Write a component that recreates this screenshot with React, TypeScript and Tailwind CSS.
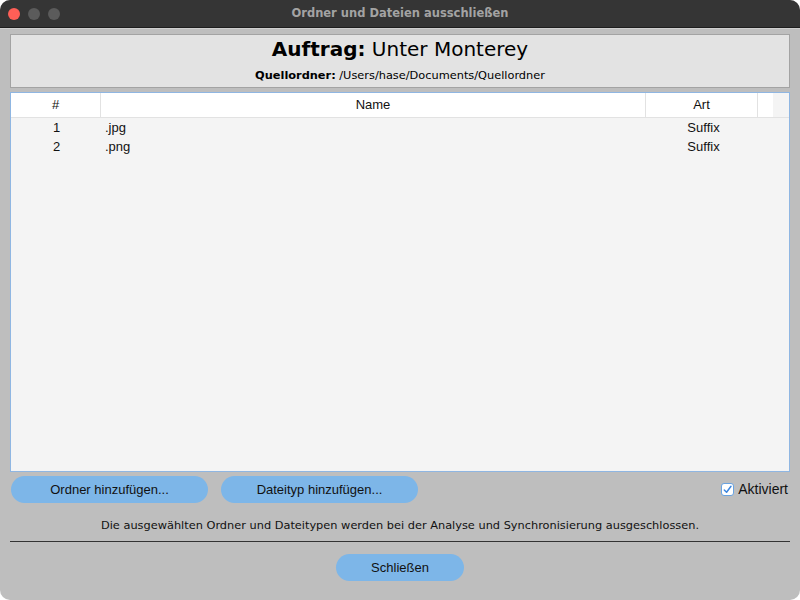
import React from "react";

const dv = { fontFamily: '"DejaVu Sans", sans-serif' };
const lib = { fontFamily: '"Liberation Sans", Arial, sans-serif' };

function Btn({ children, w }: { children: React.ReactNode; w: string }) {
  return (
    <button
      className={`h-[27px] ${w} rounded-full bg-[#7db6e8] text-[13px] text-[#111] flex items-center justify-center`}
      style={lib}
    >
      {children}
    </button>
  );
}

export default function App() {
  const rows = [
    { n: "1", name: ".jpg", art: "Suffix" },
    { n: "2", name: ".png", art: "Suffix" },
  ];
  return (
    <div className="w-[800px] h-[600px] bg-white">
      <div className="w-[800px] h-[600px] rounded-[10px] overflow-hidden bg-[#bebebe] flex flex-col">
        <div className="h-[28px] bg-[#353535] flex items-center relative shrink-0 border-b border-[#1e1e1e]">
          <div className="flex gap-[8px] pl-[8px]">
            <span className="w-[12px] h-[12px] rounded-full bg-[#fe5f57]" />
            <span className="w-[12px] h-[12px] rounded-full bg-[#5b5b5b]" />
            <span className="w-[12px] h-[12px] rounded-full bg-[#5b5b5b]" />
          </div>
          <div
            className="absolute inset-0 flex items-center justify-center text-[11.5px] font-bold text-[#a3a3a3]"
            style={dv}
          >
            Ordner und Dateien ausschließen
          </div>
        </div>
        <div className="h-px bg-[#cfcfcf] shrink-0" />
        <div className="px-[10px] pt-[5px] flex flex-col flex-1">
          <div className="h-[54px] bg-[#e3e3e3] border border-[#a3a3a3] flex flex-col items-center pt-[2px]">
            <div className="text-[20px] leading-[24px] text-black" style={dv}>
              <span className="font-bold">Auftrag:</span> Unter Monterey
            </div>
            <div className="text-[11.35px] leading-[14px] mt-[7px] text-black" style={dv}>
              <span className="font-bold">Quellordner:</span> /Users/hase/Documents/Quellordner
            </div>
          </div>
          <div className="mt-[4px] h-[380px] border border-[#8fb6e2] bg-[#f4f4f4] flex flex-col" style={lib}>
            <div className="flex h-[25px] text-[13px] text-[#111] border-b border-[#e2e2e2]">
              <div className="w-[90px] bg-white flex items-center justify-center border-r border-[#e2e2e2]">#</div>
              <div className="w-[545px] bg-white flex items-center justify-center border-r border-[#e2e2e2]">Name</div>
              <div className="w-[112px] bg-white flex items-center justify-center border-r border-[#e2e2e2]">Art</div>
              <div className="w-[15px] bg-white" />
              <div className="flex-1" />
            </div>
            <div>
              {rows.map((r) => (
                <div key={r.n} className="flex h-[19px] items-center text-[13px] text-[#111]">
                  <div className="w-[91px] text-center">{r.n}</div>
                  <div className="w-[545px] pl-[3px]">{r.name}</div>
                  <div className="w-[113px] text-center">{r.art}</div>
                </div>
              ))}
            </div>
          </div>
          <div className="flex items-center mt-[4px] pl-[1px] gap-[13px]">
            <Btn w="w-[197px]">Ordner hinzufügen...</Btn>
            <Btn w="w-[197px]">Dateityp hinzufügen...</Btn>
            <div className="flex-1" />
            <label className="flex items-center gap-[4px] text-[14px] text-[#111] pr-[2px]" style={lib}>
              <span className="w-[13px] h-[13px] rounded-[3px] bg-white border border-[#6aa3e0] flex items-center justify-center">
                <svg viewBox="0 0 12 12" className="w-[11px] h-[11px]">
                  <path d="M2.5 6.5 L5 9 L9.8 2.5" fill="none" stroke="#3b86e0" strokeWidth="1.6" strokeLinecap="round" strokeLinejoin="round" />
                </svg>
              </span>
              Aktiviert
            </label>
          </div>
          <div className="text-center text-[11.35px] text-[#111] mt-[15px] leading-[14px]" style={dv}>
            Die ausgewählten Ordner und Dateitypen werden bei der Analyse und Synchronisierung ausgeschlossen.
          </div>
          <div className="h-px bg-[#333] mt-[9px]" />
          <div className="flex justify-center mt-[12px]">
            <Btn w="w-[128px]">Schließen</Btn>
          </div>
        </div>
      </div>
    </div>
  );
}
